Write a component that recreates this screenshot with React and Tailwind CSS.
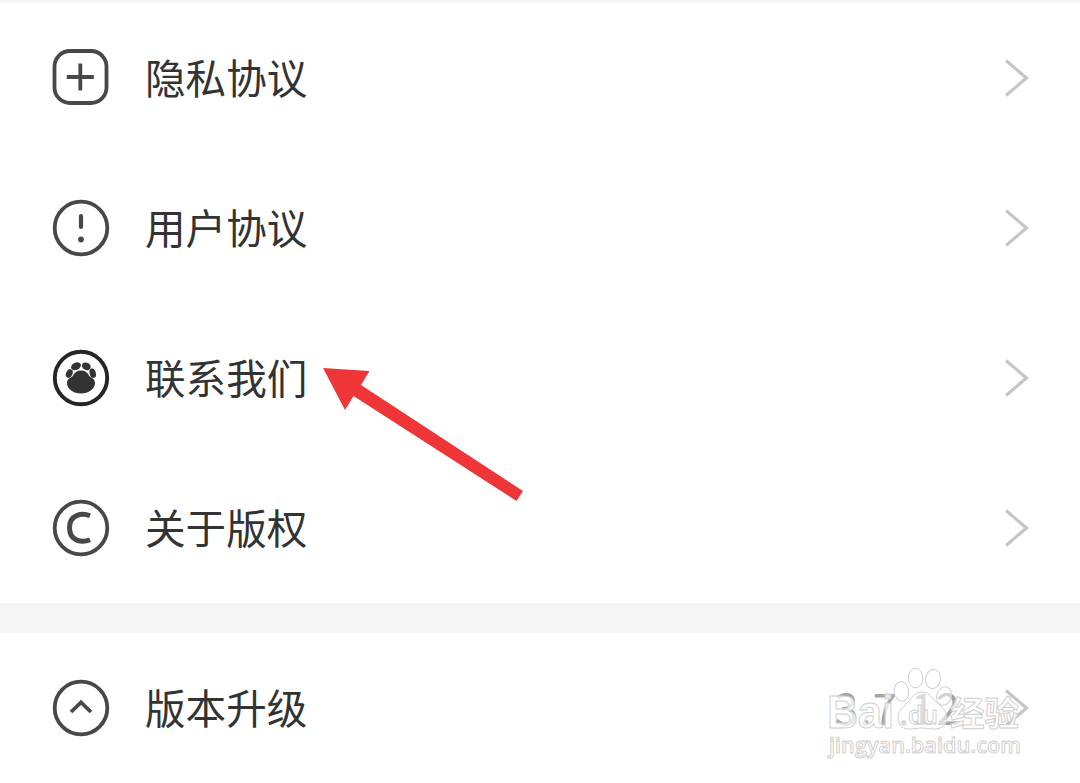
const PlusIcon = () => (
  <>
    <rect x="4.500" y="3" width="52" height="52" rx="15.500" />
    <path d="M30.300 15.500v27M16.800 29h27" />
  </>
);

const AlertIcon = () => (
  <>
    <circle cx="31" cy="30" r="26.3" />
    <path d="M31 18v11" strokeWidth="4.2" strokeLinecap="round" />
    <circle cx="31" cy="41.5" r="2.9" fill="currentColor" stroke="none" />
  </>
);

const PawIcon = () => (
  <g className="text-[#262626]">
    <circle cx="31" cy="30" r="26.2" stroke="currentColor" strokeWidth="3.9" />
    <g fill="#333333" stroke="none">
      <path d="M31 22.500c4 0 6.800 2 8.300 5.500 1.600 1.800 5.700 2.600 5.700 7C45 41 38.500 45.500 31 45.500S17 41 17 35c0-4.400 4.200-5.200 5.700-7 1.600-3.500 4.300-5.500 8.300-5.500z" />
      <ellipse cx="26" cy="18.300" rx="5.200" ry="3.600" transform="rotate(-25 26 18.300)" />
      <ellipse cx="36.300" cy="18.300" rx="4.600" ry="3.700" transform="rotate(28 36.300 18.300)" />
      <ellipse cx="19.300" cy="25.500" rx="3.200" ry="4.500" transform="rotate(25 19.300 25.500)" />
      <ellipse cx="42.700" cy="25.200" rx="3.100" ry="4.800" transform="rotate(-15 42.700 25.200)" />
    </g>
  </g>
);

const CopyrightIcon = () => (
  <>
    <circle cx="31" cy="30" r="26.3" />
    <path d="M40 17.800C32 14.500 19.500 16.500 19.500 29.800c0 13.400 12.500 15.400 20.500 12" strokeWidth="5" />
  </>
);

const UpgradeIcon = () => (
  <>
    <circle cx="31" cy="30" r="26.3" />
    <path d="M21 34l10-9.700 10 9.700" strokeWidth="3.800" />
  </>
);

const agreements = [
  { label: "隐私协议", Icon: PlusIcon },
  { label: "用户协议", Icon: AlertIcon },
  { label: "联系我们", Icon: PawIcon },
  { label: "关于版权", Icon: CopyrightIcon },
];

const Row = ({ label, Icon, value }) => (
  <div className="flex h-[150px] items-center bg-white pl-[50px] pr-[50px]">
    <svg width="62" height="60" viewBox="0 0 62 60" fill="none" stroke="#484848" strokeWidth="3.8" className="shrink-0 text-[#484848]">
      <Icon />
    </svg>
    <span className="ml-[33px] pb-[2px] text-[40.600px] leading-[60px] whitespace-nowrap text-[#333333]">{label}</span>
    <span className="ml-auto pb-1 text-[43px] leading-[60px] tracking-[1.200px] text-[#a6a6a6]">{value}</span>
    <svg width="26" height="40" viewBox="0 0 26 40" fill="none" stroke="#c6c6c6" strokeWidth="3.200" className="ml-[43px] shrink-0">
      <path d="M2 2.500l20.500 17.500L2 37.500" />
    </svg>
  </div>
);

// red pointer lying over the contact row
const Arrow = () => (
  <svg className="absolute left-[320px] top-[364px]" width="208" height="142" viewBox="0 0 208 142">
    <path d="M3 4l46.500 3-8.500 14L203 127l-6.500 10L33.500 32 25 46z" fill="#ee3538" />
  </svg>
);

const Watermark = () => (
  <svg className="absolute left-[820px] top-[660px]" width="220" height="110" viewBox="0 0 220 110">
    <g fill="#ffffff" fillOpacity="0.75" stroke="#cfcfcf" strokeWidth="1">
      <text x="7" y="68" fontFamily="Liberation Sans, sans-serif" fontWeight="700" fontSize="46" textLength="67" lengthAdjust="spacingAndGlyphs">
        Bai
      </text>
      <g fillOpacity="0.5">
        <ellipse cx="81.500" cy="31.500" rx="7.300" ry="9.800" transform="rotate(-8 81.500 31.500)" />
        <ellipse cx="95.500" cy="18" rx="7.200" ry="9.800" />
        <ellipse cx="113" cy="19" rx="7.500" ry="9.500" transform="rotate(8 113 19)" />
        <ellipse cx="124" cy="36" rx="7.200" ry="9.500" transform="rotate(18 124 36)" />
      </g>
      <path fillOpacity="0.6" d="M102 32c6 0 9 4 13 9 4 4 12 8 12 17 0 8-6 11-13 11-5 0-8-1-12-1s-8 1-13 1c-7 0-11-4-11-11 0-8 7-12 11-17 4-5 7-9 13-9z" />
      <text x="88" y="64" fontFamily="Open Sans, sans-serif" fontWeight="600" fontSize="26" textLength="30" lengthAdjust="spacingAndGlyphs">
        du
      </text>
      <text x="130" y="66" fontFamily="Noto Sans CJK SC, sans-serif" fontWeight="700" fontSize="34.500" textLength="69">
        经验
      </text>
      <text x="9" y="93" fontFamily="Open Sans, sans-serif" fontWeight="600" fontSize="22" textLength="192" lengthAdjust="spacingAndGlyphs">
        jingyan.baidu.com
      </text>
    </g>
  </svg>
);

export default function App() {
  return (
    <div className="relative h-[783px] w-[1080px] overflow-hidden bg-[#f5f5f5] pt-[3px] font-['Noto_Sans_CJK_SC',sans-serif]">
      <div className="mb-[30px]">
        {agreements.map((item) => (
          <Row key={item.label} {...item} />
        ))}
      </div>
      <Row label="版本升级" Icon={UpgradeIcon} value="3.7.12" />
      <Arrow />
      <Watermark />
    </div>
  );
}
